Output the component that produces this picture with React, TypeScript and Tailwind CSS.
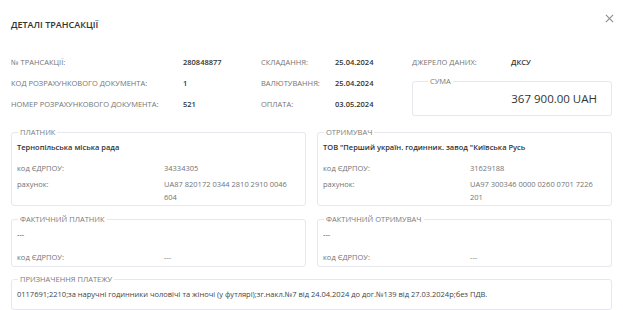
const Row = ({ label, value }: { label: string; value: string }) => (
  <>
    <div className="h-[21px] flex items-center text-[#747474]">{label}</div>
    <div className="h-[21px] flex items-center font-semibold text-[#333]">{value}</div>
  </>
);

const Box = ({
  title,
  className = "",
  children,
}: {
  title: string;
  className?: string;
  children: React.ReactNode;
}) => (
  <fieldset className={`border border-[#e6e7ef] rounded-[3px] px-[5px] ${className}`}>
    <legend className="ml-[1px] px-[2px] text-[7.5px] leading-[10px] text-[#7a7a7a]">{title}</legend>
    {children}
  </fieldset>
);

const Party = ({ title, name, code, account }: { title: string; name: string; code: string; account: string }) => (
  <Box title={title} className="pb-[1px]">
    <div className="pt-[5px] leading-[10px] font-semibold text-[#333]">{name}</div>
    <div className="grid grid-cols-[147px_1fr] gap-y-[3px] mt-[10px] leading-[13px] text-[#747474]">
      <div>код ЄДРПОУ:</div>
      <div>{code}</div>
      <div>рахунок:</div>
      <div className="pr-[3px]">{account}</div>
    </div>
  </Box>
);

const Actual = ({ title }: { title: string }) => (
  <Box title={title} className="pb-[2px]">
    <div className="pt-[5px] leading-[10px] text-[#444]">---</div>
    <div className="grid grid-cols-[147px_1fr] mt-[12px] leading-[13px] text-[#747474]">
      <div>код ЄДРПОУ:</div>
      <div>---</div>
    </div>
  </Box>
);

export default function App() {
  return (
    <div className="w-[623px] h-[310px] bg-white px-[11px] text-[7.5px] overflow-hidden" style={{ fontFamily: '"Open Sans", sans-serif' }}>
      <div className="flex items-center justify-between pt-[19px] h-[31px]">
        <h1 className="text-[9px] leading-[12px] font-semibold text-[#333]">ДЕТАЛІ ТРАНСАКЦІЇ</h1>
        <svg width="9" height="9" viewBox="0 0 10 10" className="mr-[-2px] mt-[-14px]" stroke="#8a8a8a" strokeWidth="1.2">
          <path d="M1 1L9 9M9 1L1 9" />
        </svg>
      </div>

      <div className="grid grid-cols-[172px_78px_74px_77px_99px_1fr] mt-[21px]">
        <Row label="№ ТРАНСАКЦІЇ:" value="280848877" />
        <Row label="СКЛАДАННЯ:" value="25.04.2024" />
        <Row label="ДЖЕРЕЛО ДАНИХ:" value="ДКСУ" />
        <Row label="КОД РОЗРАХУНКОВОГО ДОКУМЕНТА:" value="1" />
        <Row label="ВАЛЮТУВАННЯ:" value="25.04.2024" />
        <div className="col-span-2 row-span-2 pt-[3px]">
          <Box title="СУМА" className="h-[40px] px-[14px]">
            <div className="text-right text-[11.5px] leading-[16px] text-[#333] pt-[5px]">367 900.00 UAH</div>
          </Box>
        </div>
        <Row label="НОМЕР РОЗРАХУНКОВОГО ДОКУМЕНТА:" value="521" />
        <Row label="ОПЛАТА:" value="03.05.2024" />
      </div>

      <div className="grid grid-cols-2 gap-x-[11px] mt-[11px]">
        <Party
          title="ПЛАТНИК"
          name="Тернопільська міська рада"
          code="34334305"
          account="UA87 820172 0344 2810 2910 0046 604"
        />
        <Party
          title="ОТРИМУВАЧ"
          name={'ТОВ "Перший україн. годинник. завод "Київська Русь'}
          code="31629188"
          account="UA97 300346 0000 0260 0701 7226 201"
        />
      </div>

      <div className="grid grid-cols-2 gap-x-[11px] mt-[8px]">
        <Actual title="ФАКТИЧНИЙ ПЛАТНИК" />
        <Actual title="ФАКТИЧНИЙ ОТРИМУВАЧ" />
      </div>

      <Box title="ПРИЗНАЧЕННЯ ПЛАТЕЖУ" className="mt-[7px] pb-[8px]">
        <div className="pt-[4px] leading-[13px] text-[#444]">
          0117691;2210;за наручні годинники чоловічі та жіночі (у футлярі);зг.накл.№7 від 24.04.2024 до дог.№139 від 27.03.2024р;без ПДВ.
        </div>
      </Box>
    </div>
  );
}
